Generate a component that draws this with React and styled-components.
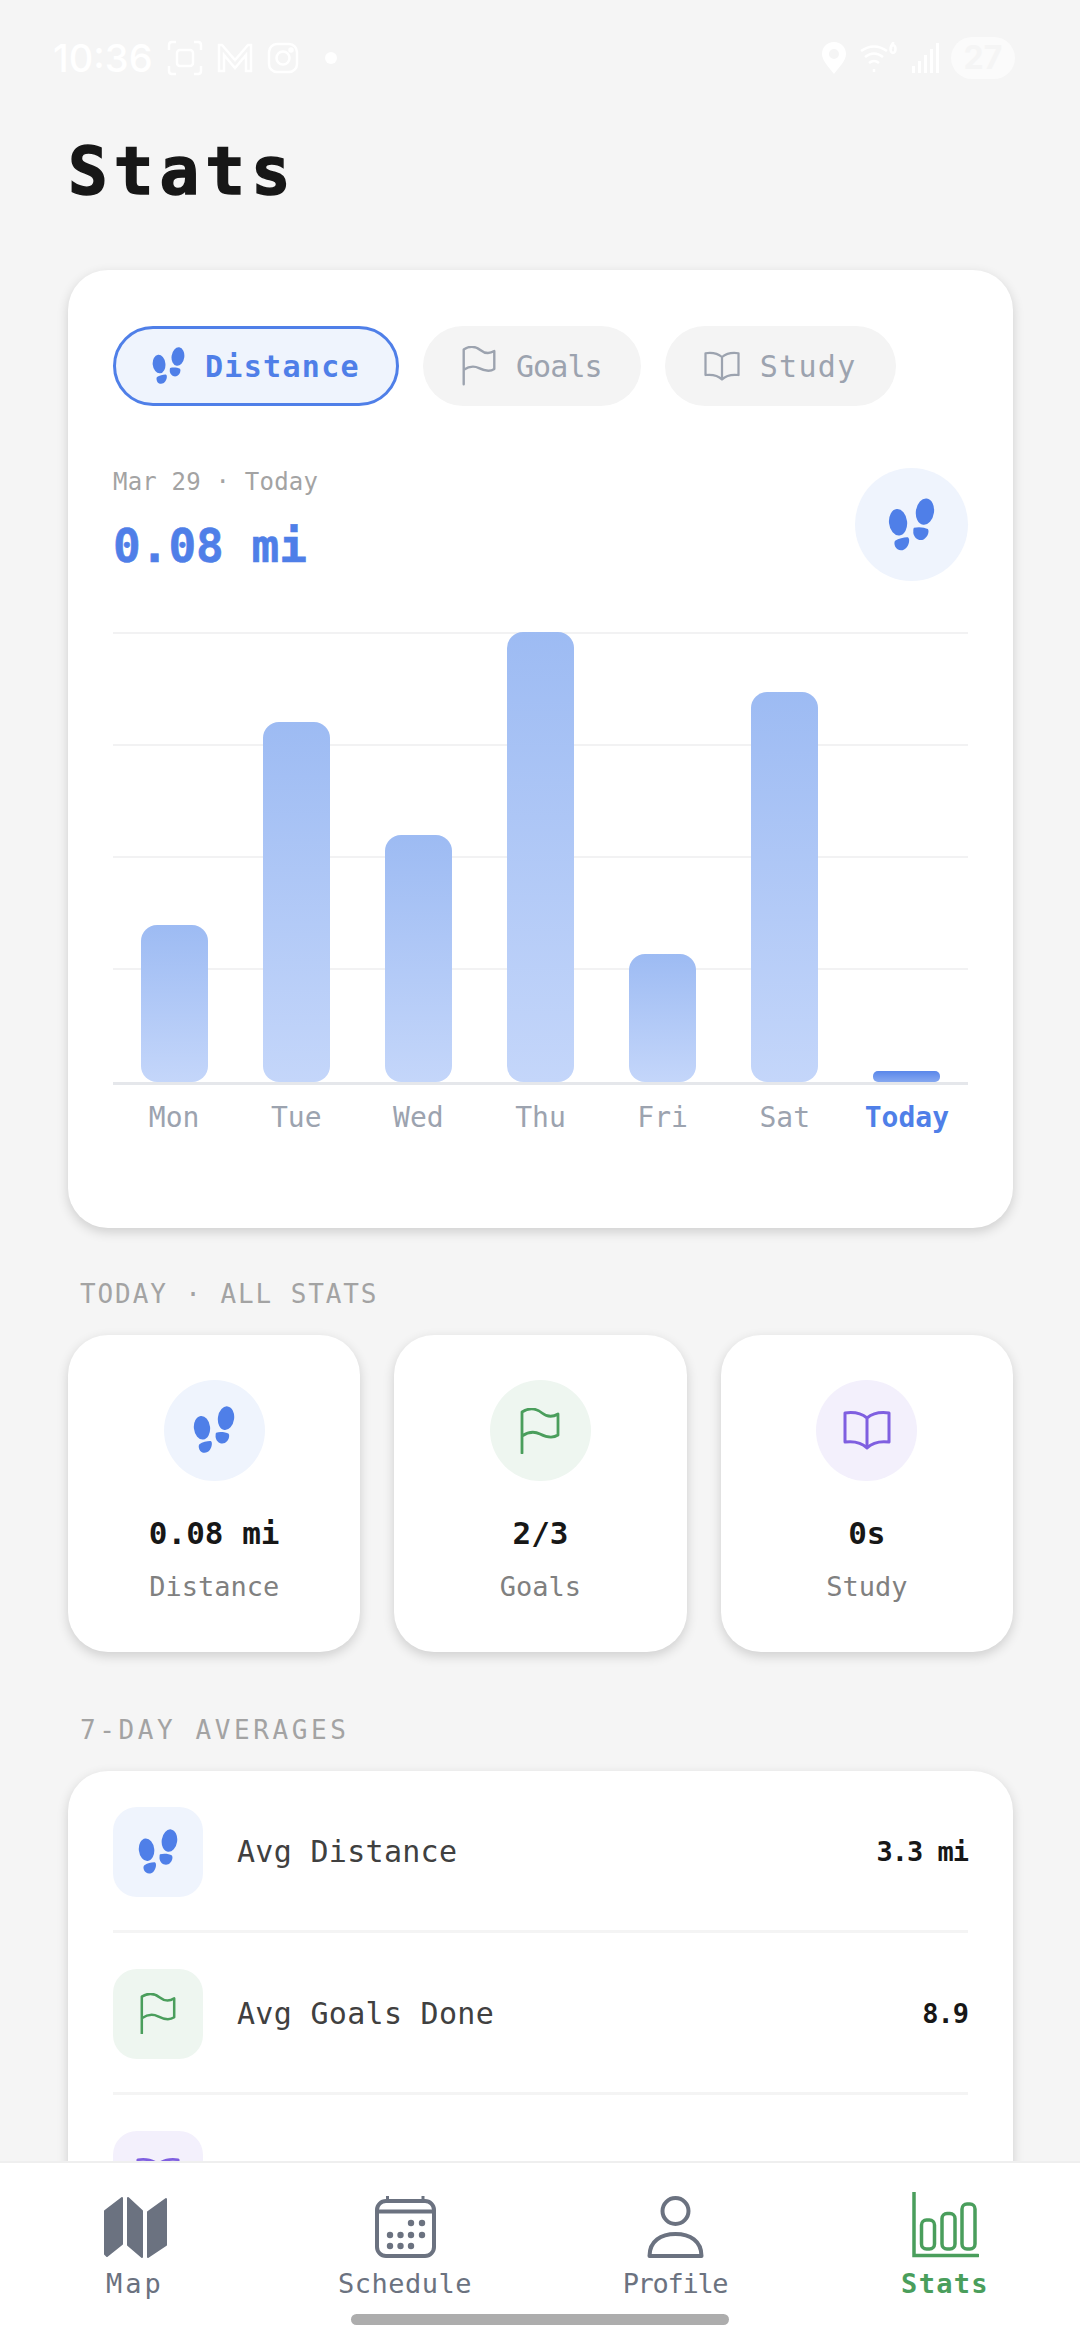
import React from "react";
import styled, { createGlobalStyle } from "styled-components";

const BLUE = "#4f7fe8";
const GREEN = "#4a9e5c";
const PURPLE = "#7f5fe0";
const NAV_GREY = "#6b7280";

const days = [
  { name: "Mon", height: 157 },
  { name: "Tue", height: 360 },
  { name: "Wed", height: 247 },
  { name: "Thu", height: 450 },
  { name: "Fri", height: 128 },
  { name: "Sat", height: 390 },
  { name: "Today", height: 11, today: true },
];

const Footprints = ({ width, color = BLUE }) => (
  <svg width={width} height={(width * 166) / 145} viewBox="112 108 145 166" fill={color}>
    <ellipse cx="143" cy="183" rx="28" ry="41" transform="rotate(-6 143 183)" />
    <path d="M134 240C145 232 165 228 173 229C180 232 178 250 170 260C160 274 140 272 134 258C131 250 131 244 134 240Z" />
    <ellipse cx="226" cy="150" rx="28" ry="41" transform="rotate(8 226 150)" />
    <path d="M192 200C205 196 225 198 235 204C240 212 235 228 222 236C205 242 192 230 190 215C190 207 190 202 192 200Z" />
  </svg>
);

const Flag = ({ width, color }) => (
  <svg
    width={width}
    height={(width * 46) / 40}
    viewBox="0 0 40 46"
    fill="none"
    stroke={color}
    strokeWidth="2.8"
    strokeLinecap="round"
    strokeLinejoin="round"
  >
    <path d="M2 45V4C10-1 17 1 22 5S33 9 38 6V27C32 31 26 29 20 26S8 24 2 28" />
  </svg>
);

const Book = ({ width, color }) => (
  <svg
    width={width}
    height={(width * 41) / 48}
    viewBox="0 0 48 41"
    fill="none"
    stroke={color}
    strokeWidth="3"
    strokeLinejoin="round"
  >
    <path d="M24 8C18 3 9 2 2 3V32C10 31 18 32 24 38C30 32 38 31 46 32V3C39 2 30 3 24 8V38" />
  </svg>
);

const MapIcon = () => (
  <svg width="63" height="61" viewBox="0 0 63 61" fill={NAV_GREY} stroke={NAV_GREY} strokeWidth="2" strokeLinejoin="round">
    <path d="M1 14L18 1V47L3 59L1 57Z" />
    <path d="M24 1L38 14V60L24 48Z" />
    <path d="M44 15L62 2V48L44 60Z" />
  </svg>
);

const CalendarIcon = () => (
  <svg width="61" height="62" viewBox="0 0 61 62">
    <g fill="none" stroke={NAV_GREY} strokeWidth="4">
      <rect x="2" y="5" width="57" height="55" rx="9" />
      <path d="M2 15.5H59" />
    </g>
    <path d="M12.5 0V5M48 0V5" stroke={NAV_GREY} strokeWidth="3" />
    <g fill={NAV_GREY}>
      {[
        [36, 27],
        [47, 27],
        [15, 39],
        [25.5, 39],
        [36, 39],
        [47, 39],
        [15, 50],
        [25.5, 50],
        [36, 50],
      ].map(([cx, cy]) => (
        <circle key={`${cx}-${cy}`} cx={cx} cy={cy} r="3.2" />
      ))}
    </g>
  </svg>
);

const ProfileIcon = () => (
  <svg width="57" height="62" viewBox="0 0 57 62" fill="none" stroke={NAV_GREY} strokeWidth="4" strokeLinejoin="round">
    <circle cx="28.5" cy="15" r="13" />
    <path d="M2.5 60C2.5 45 14 38 28.5 38S54.5 45 54.5 60Z" />
  </svg>
);

const ChartIcon = () => (
  <svg width="67" height="66" viewBox="0 0 67 66" fill="none" stroke={GREEN}>
    <path d="M2 0V63.5H66" strokeWidth="3.5" strokeLinecap="round" />
    <rect x="9.5" y="28" width="13" height="29" rx="5" strokeWidth="3.5" />
    <rect x="30" y="21.5" width="13" height="35.5" rx="5" strokeWidth="3.5" />
    <rect x="50" y="12" width="13" height="45" rx="5" strokeWidth="3.5" />
  </svg>
);

const App = () => {
  return (
    <Screen>
      <GlobalStyle />
      <Scroll>
        <StatusBar>
          <StatusLeft>
            <Clock>10:36</Clock>
            <svg width="36" height="36" viewBox="0 0 36 36" fill="none" stroke="#fff" strokeWidth="2.5">
              <path d="M2 10V5q0-3 3-3h4M27 2h4q3 0 3 3v5M34 26v5q0 3-3 3h-4M9 34H5q-3 0-3-3v-5" />
              <rect x="10" y="10" width="16" height="16" rx="3" />
            </svg>
            <svg width="36" height="30" viewBox="0 0 36 30" fill="none" stroke="#fff" strokeWidth="2.5">
              <path d="M2 28V2h3l13 15L31 2h3v26h-5V12L18 25 7 12v16z" />
            </svg>
            <svg width="32" height="32" viewBox="0 0 32 32" fill="none" stroke="#fff" strokeWidth="2.5">
              <rect x="2" y="2" width="28" height="28" rx="8" />
              <circle cx="16" cy="16" r="6.5" />
              <circle cx="24" cy="8" r="1.5" fill="#fff" />
            </svg>
            <Dot />
          </StatusLeft>
          <StatusRight>
            <svg width="24" height="32" viewBox="0 0 24 32" fill="#fff">
              <path
                fillRule="evenodd"
                d="M12 0C5 0 0 5 0 12c0 7 7 13 12 20 5-7 12-13 12-20C24 5 19 0 12 0zm0 7a5 5 0 1 1 0 10 5 5 0 0 1 0-10z"
              />
            </svg>
            <svg width="38" height="32" viewBox="0 0 38 32" fill="none" stroke="#fff" strokeWidth="2.5">
              <path d="M1 9q13-9 26 0M5 15q9-7 18 0M9 21q5-4 10 0" />
              <path d="M14 27v3" />
              <ellipse cx="33" cy="7" rx="2.5" ry="4" />
              <path d="M31 7q0-5 3-7" />
            </svg>
            <svg width="28" height="30" viewBox="0 0 28 30" fill="#fff">
              <rect x="0" y="23" width="3" height="7" />
              <rect x="6" y="18" width="3" height="12" />
              <rect x="12" y="12" width="3" height="18" />
              <rect x="18" y="6" width="3" height="24" />
              <rect x="24" y="0" width="3" height="30" />
            </svg>
            <Battery>27</Battery>
          </StatusRight>
        </StatusBar>

        <Title>Stats</Title>

        <ChartCard>
          <Tabs>
            <Tab $active $spacing={1.3}>
              <Footprints width={33} />
              Distance
            </Tab>
            <Tab $spacing={-0.9}>
              <Flag width={34} color="#9ca3af" />
              Goals
            </Tab>
            <Tab $spacing={1.3}>
              <Book width={36} color="#9ca3af" />
              Study
            </Tab>
          </Tabs>

          <Summary>
            <div>
              <DateText>Mar 29 · Today</DateText>
              <BigValue>0.08 mi</BigValue>
            </div>
            <SummaryIcon>
              <Footprints width={47} />
            </SummaryIcon>
          </Summary>

          <Plot>
            <GridLines>
              <GridLine />
              <GridLine />
              <GridLine />
              <GridLine />
            </GridLines>
            {days.map((d) => (
              <BarSlot key={d.name}>
                <Bar $today={d.today} style={{ height: d.height }} />
              </BarSlot>
            ))}
          </Plot>
          <DayLabels>
            {days.map((d) => (
              <DayLabel key={d.name} $today={d.today}>
                {d.name}
              </DayLabel>
            ))}
          </DayLabels>
        </ChartCard>

        <SectionLabel $spacing={1.9}>TODAY · ALL STATS</SectionLabel>
        <StatGrid>
          <StatCard>
            <StatIcon $bg="#eff4fd">
              <Footprints width={42} />
            </StatIcon>
            <StatValue>0.08 mi</StatValue>
            <StatName>Distance</StatName>
          </StatCard>
          <StatCard>
            <StatIcon $bg="#eef6f0">
              <Flag width={40} color={GREEN} />
            </StatIcon>
            <StatValue>2/3</StatValue>
            <StatName>Goals</StatName>
          </StatCard>
          <StatCard>
            <StatIcon $bg="#f3f0fc">
              <Book width={48} color={PURPLE} />
            </StatIcon>
            <StatValue>0s</StatValue>
            <StatName>Study</StatName>
          </StatCard>
        </StatGrid>

        <SectionLabel $spacing={3.6}>7-DAY AVERAGES</SectionLabel>
        <ListCard>
          <Row>
            <RowIcon $bg="#eff4fd">
              <Footprints width={40} />
            </RowIcon>
            <RowName>Avg Distance</RowName>
            <RowValue>3.3 mi</RowValue>
          </Row>
          <Row>
            <RowIcon $bg="#eef6f0">
              <Flag width={36} color={GREEN} />
            </RowIcon>
            <RowName>Avg Goals Done</RowName>
            <RowValue>8.9</RowValue>
          </Row>
          <Row>
            <RowIcon $bg="#f3f0fc">
              <Book width={44} color={PURPLE} />
            </RowIcon>
          </Row>
        </ListCard>
      </Scroll>

      <Nav>
        <NavItem $spacing={3}>
          <NavIcon>
            <MapIcon />
          </NavIcon>
          Map
        </NavItem>
        <NavItem $spacing={0.5}>
          <NavIcon>
            <CalendarIcon />
          </NavIcon>
          Schedule
        </NavItem>
        <NavItem $spacing={-1.3}>
          <NavIcon>
            <ProfileIcon />
          </NavIcon>
          Profile
        </NavItem>
        <NavItem $active $spacing={1.3}>
          <NavIcon>
            <ChartIcon />
          </NavIcon>
          Stats
        </NavItem>
        <HomeBar />
      </Nav>
    </Screen>
  );
};

export default App;

const GlobalStyle = createGlobalStyle`
  html, body {
    margin: 0;
    background: #f5f5f5;
  }
  * {
    box-sizing: border-box;
  }
`;

const Screen = styled.div`
  width: 1080px;
  height: 2340px;
  display: flex;
  flex-direction: column;
  overflow: hidden;
  background: #f5f5f5;
  font-family: "DejaVu Sans Mono", "Liberation Mono", monospace;
`;

const Scroll = styled.main`
  flex: 1;
  min-height: 0;
  overflow: hidden;
  padding: 37px 67px 0 68px;
`;

const StatusBar = styled.div`
  height: 42px;
  margin: 0 -2px 0 -15px;
  display: flex;
  justify-content: space-between;
  align-items: center;
`;

const StatusLeft = styled.div`
  display: flex;
  align-items: center;
  gap: 14px;
`;

const StatusRight = styled.div`
  display: flex;
  align-items: center;
  gap: 14px;
`;

const Clock = styled.span`
  font-family: "Inter", sans-serif;
  font-size: 38px;
  font-weight: 500;
  color: #fff;
`;

const Dot = styled.span`
  width: 12px;
  height: 12px;
  margin-left: 12px;
  border-radius: 50%;
  background: #fff;
`;

const Battery = styled.span`
  width: 64px;
  height: 42px;
  margin-left: -3px;
  border-radius: 21px;
  background: rgba(255, 255, 255, 0.6);
  color: #f5f5f5;
  font-family: "Inter", sans-serif;
  font-size: 32px;
  font-weight: 700;
  text-align: center;
  line-height: 42px;
`;

const Title = styled.h1`
  margin: 0;
  padding-top: 53px;
  height: 191px;
  font-size: 66px;
  line-height: 80px;
  font-weight: 700;
  letter-spacing: 6px;
  color: #171717;
  -webkit-text-stroke: 1.5px #171717;
`;

const Card = styled.section`
  background: #fff;
  border-radius: 40px;
  box-shadow: 0 4px 12px rgba(0, 0, 0, 0.16);
`;

const ChartCard = styled(Card)`
  height: 958px;
  padding: 56px 45px 0;
`;

const Tabs = styled.div`
  display: flex;
  gap: 24px;
`;

const Tab = styled.div`
  height: 80px;
  padding: 0 ${(p) => (p.$active ? "36px" : "39px")};
  display: flex;
  align-items: center;
  gap: 20px;
  border-radius: 40px;
  border: ${(p) => (p.$active ? `3.5px solid ${BLUE}` : "none")};
  background: ${(p) => (p.$active ? "#eff4fd" : "#f4f4f4")};
  color: ${(p) => (p.$active ? BLUE : "#9ca3af")};
  font-size: 30px;
  font-weight: ${(p) => (p.$active ? 700 : 400)};
  letter-spacing: ${(p) => p.$spacing}px;
`;

const Summary = styled.div`
  margin-top: 62px;
  margin-bottom: 51px;
  display: flex;
  justify-content: space-between;
  align-items: flex-start;
`;

const DateText = styled.div`
  font-size: 24px;
  line-height: 28px;
  color: #a3a3a3;
  letter-spacing: 0.2px;
`;

const BigValue = styled.div`
  margin-top: 22px;
  font-size: 46px;
  line-height: 56px;
  font-weight: 700;
  color: ${BLUE};
  -webkit-text-stroke: 0.6px ${BLUE};
`;

const SummaryIcon = styled.div`
  width: 113px;
  height: 113px;
  border-radius: 50%;
  background: #eff4fd;
  display: flex;
  align-items: center;
  justify-content: center;
`;

const Plot = styled.div`
  position: relative;
  height: 453px;
  display: flex;
  align-items: flex-end;
  border-bottom: 3px solid #e5e7eb;
`;

const GridLines = styled.div`
  position: absolute;
  inset: 0 0 112px 0;
  display: flex;
  flex-direction: column;
  justify-content: space-between;
`;

const GridLine = styled.div`
  height: 2px;
  background: #f2f2f3;
`;

const BarSlot = styled.div`
  position: relative;
  flex: 1;
  display: flex;
  justify-content: center;
`;

const Bar = styled.div`
  width: 67px;
  border-radius: ${(p) => (p.$today ? "5px" : "16px")};
  background: ${(p) =>
    p.$today
      ? "linear-gradient(180deg, #5a87ea, #86a8f0)"
      : "linear-gradient(180deg, #9dbbf3, #c4d6fa)"};
`;

const DayLabels = styled.div`
  margin-top: 16px;
  display: flex;
`;

const DayLabel = styled.div`
  flex: 1;
  text-align: center;
  font-size: 28px;
  line-height: 34px;
  font-weight: ${(p) => (p.$today ? 700 : 400)};
  color: ${(p) => (p.$today ? BLUE : "#9ca3af")};
`;

const SectionLabel = styled.div`
  margin: 0 0 0 12px;
  padding-top: 50px;
  height: 107px;
  font-size: 26px;
  line-height: 32px;
  letter-spacing: ${(p) => p.$spacing}px;
  color: #a3a3a3;
`;

const StatGrid = styled.div`
  display: grid;
  grid-template-columns: repeat(3, 1fr);
  gap: 34px;
  margin-bottom: 12px;
`;

const StatCard = styled(Card)`
  height: 317px;
  padding-top: 45px;
  display: flex;
  flex-direction: column;
  align-items: center;
`;

const StatIcon = styled.div`
  width: 101px;
  height: 101px;
  border-radius: 50%;
  background: ${(p) => p.$bg};
  display: flex;
  align-items: center;
  justify-content: center;
`;

const StatValue = styled.div`
  margin-top: 33px;
  font-size: 31px;
  line-height: 38px;
  font-weight: 700;
  color: #171717;
`;

const StatName = styled.div`
  margin-top: 18px;
  font-size: 27px;
  line-height: 34px;
  color: #808080;
`;

const ListCard = styled(Card)`
  padding: 0 45px;
  height: 600px;
`;

const Row = styled.div`
  height: 162px;
  display: flex;
  align-items: center;
  gap: 34px;
  padding-top: 2px;
  border-bottom: 3px solid #f4f4f4;
`;

const RowIcon = styled.div`
  width: 90px;
  height: 90px;
  border-radius: 24px;
  background: ${(p) => p.$bg};
  display: flex;
  align-items: center;
  justify-content: center;
`;

const RowName = styled.div`
  flex: 1;
  font-size: 30px;
  letter-spacing: 0.3px;
  color: #404040;
`;

const RowValue = styled.div`
  font-size: 27px;
  font-weight: 700;
  letter-spacing: -1px;
  color: #171717;
`;

const Nav = styled.nav`
  position: relative;
  flex: none;
  height: 179px;
  display: grid;
  grid-template-columns: repeat(4, 1fr);
  background: #fff;
  border-top: 2px solid #efefef;
`;

const NavItem = styled.div`
  height: 136px;
  padding-top: 27px;
  display: flex;
  flex-direction: column;
  align-items: center;
  gap: 11px;
  color: ${(p) => (p.$active ? GREEN : NAV_GREY)};
  font-size: 27px;
  line-height: 30px;
  font-weight: ${(p) => (p.$active ? 700 : 400)};
  letter-spacing: ${(p) => p.$spacing}px;
`;

const NavIcon = styled.div`
  height: 68px;
  display: flex;
  align-items: flex-end;
  justify-content: center;
`;

const HomeBar = styled.div`
  position: absolute;
  left: 351px;
  bottom: 15px;
  width: 378px;
  height: 11px;
  border-radius: 6px;
  background: #adadad;
`;
